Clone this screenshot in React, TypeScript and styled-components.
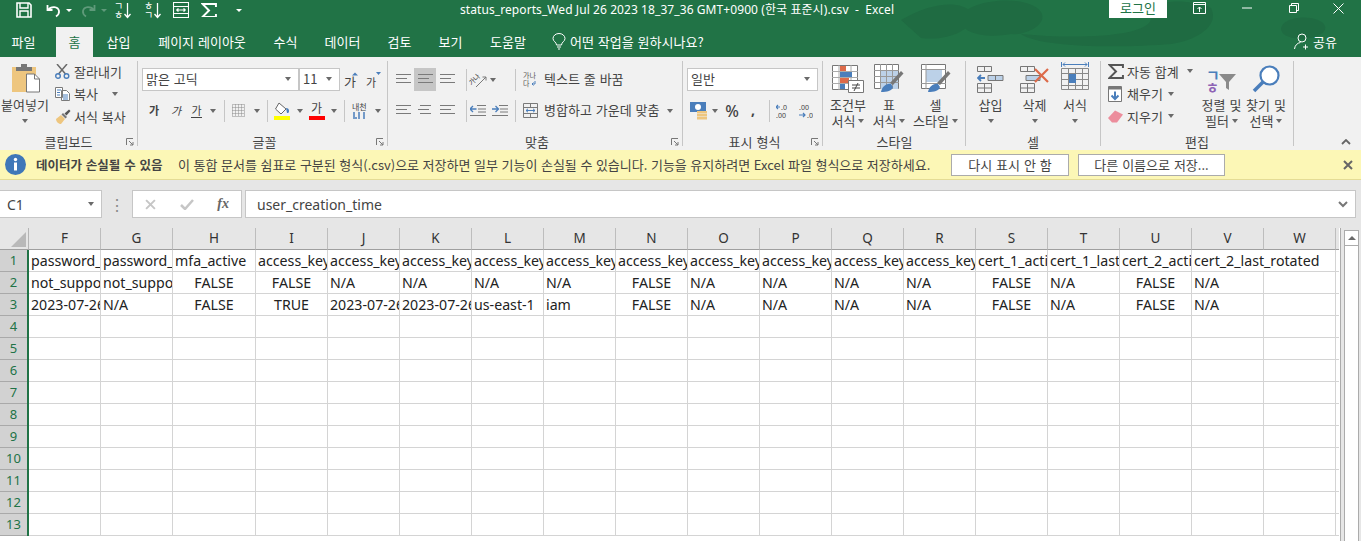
import React from "react";
import styled, { createGlobalStyle } from "styled-components";

const KR = `"Noto Sans CJK KR", "Noto Sans", sans-serif`;
const LATIN = `"Noto Sans", "Noto Sans CJK KR", sans-serif`;

const GlobalStyle = createGlobalStyle`
  html, body { margin: 0; padding: 0; height: 541px; overflow: hidden; background: #e6e6e6; }
  * { box-sizing: border-box; }
  svg { display: block; }
`;

const Page = styled.div`
  width: 1361px;
  height: 541px;
  overflow: hidden;
  display: flex;
  flex-direction: column;
  font-family: ${KR};
  color: #444;
`;

/* ---------- title bar ---------- */
const Header = styled.div`
  position: relative;
  height: 57px;
  background: #217346;
  color: #fff;
`;
const HeaderArt = styled.svg`
  position: absolute;
  right: 0;
  top: 0;
`;
const TitleRow = styled.div`
  position: relative;
  height: 20px;
  margin-bottom: 7px;
  display: flex;
  align-items: center;
`;
const Qat = styled.div`
  width: 460px;
  flex: none;
  display: flex;
  align-items: center;
  padding-left: 16px;
`;
const QatSlot = styled.div<{ $w: number }>`
  width: ${(p) => p.$w}px;
  flex: none;
  display: flex;
  align-items: center;
`;
const QatCaret = styled.span<{ $dim?: boolean }>`
  display: block;
  width: 0;
  height: 0;
  border-left: 3px solid transparent;
  border-right: 3px solid transparent;
  border-top: 3px solid ${(p) => (p.$dim ? "#5f9a7a" : "#fff")};
`;
const Title = styled.div`
  width: 649px;
  flex: none;
  font-size: 12px;
  letter-spacing: 0.08px;
  white-space: pre;
  font-family: ${LATIN};
  margin-top: -2px;
`;
const SignIn = styled.button`
  width: 58px;
  height: 18px;
  flex: none;
  align-self: flex-start;
  border: 0;
  background: #fff;
  color: #217346;
  font-family: ${KR};
  font-size: 13px;
  line-height: 16px;
  padding: 0 0 2px;
`;
const WinControls = styled.div`
  display: flex;
  align-items: center;
  margin: -4px 0 0 9px;
`;
const WinBtn = styled.div<{ $w: number }>`
  width: ${(p) => p.$w}px;
  flex: none;
  display: flex;
  justify-content: center;
`;
const TabRow = styled.div`
  position: relative;
  height: 30px;
  display: flex;
  align-items: stretch;
  font-size: 13px;
  word-spacing: 1px;
`;
const Tab = styled.div<{ $active?: boolean; $w: number }>`
  width: ${(p) => p.$w}px;
  flex: none;
  display: flex;
  align-items: center;
  justify-content: center;
  padding-bottom: 2px;
  white-space: nowrap;
  background: ${(p) => (p.$active ? "#f1f1f1" : "transparent")};
  color: ${(p) => (p.$active ? "#217346" : "#fff")};
`;
const TellMe = styled.div`
  display: flex;
  align-items: center;
  gap: 4px;
  margin-left: 12px;
  padding-bottom: 2px;
  width: 742px;
  flex: none;
  white-space: nowrap;
`;
const Share = styled.div`
  display: flex;
  align-items: center;
  gap: 2px;
  padding-bottom: 2px;
`;

/* ---------- ribbon ---------- */
const Ribbon = styled.div`
  position: relative;
  height: 93px;
  padding-top: 4px;
  display: flex;
  background: #f1f1f1;
  font-size: 13px;
  word-spacing: 1px;
`;
const Group = styled.div<{ $w: number; $pl?: number }>`
  width: ${(p) => p.$w}px;
  height: 85px;
  flex: none;
  border-right: 1px solid #c6c6c6;
  padding-left: ${(p) => p.$pl ?? 0}px;
  display: flex;
  flex-direction: column;
`;
const GroupBody = styled.div`
  height: 73px;
  flex: none;
  display: flex;
`;
const StackBody = styled.div`
  height: 73px;
  flex: none;
  padding-top: 7px;
  display: flex;
  flex-direction: column;
  gap: 8px;
`;
const GroupLabel = styled.div`
  position: relative;
  height: 16px;
  line-height: 16px;
  text-align: center;
  white-space: nowrap;
`;
const Launcher = styled.svg`
  position: absolute;
  right: 3px;
  top: 4px;
`;
const Collapse = styled.svg`
  position: absolute;
  right: 10px;
  top: 82px;
`;
const ToolRow = styled.div`
  height: 23px;
  display: flex;
  align-items: center;
`;
const Cell = styled.div<{ $w: number; $active?: boolean }>`
  width: ${(p) => p.$w}px;
  height: 23px;
  flex: none;
  display: flex;
  align-items: center;
  justify-content: center;
  background: ${(p) => (p.$active ? "#c6c6c6" : "transparent")};
`;
const Caret = styled.span<{ $ml?: number }>`
  display: inline-block;
  flex: none;
  width: 0;
  height: 0;
  margin-left: ${(p) => p.$ml ?? 0}px;
  border-left: 3.5px solid transparent;
  border-right: 3.5px solid transparent;
  border-top: 4px solid #6a6a6a;
  vertical-align: middle;
`;
const VSep = styled.span<{ $ml: number }>`
  flex: none;
  width: 1px;
  height: 22px;
  margin-left: ${(p) => p.$ml}px;
  background: #c6c6c6;
`;
const Combo = styled.div<{ $w: number }>`
  width: ${(p) => p.$w}px;
  height: 23px;
  flex: none;
  display: flex;
  align-items: center;
  justify-content: space-between;
  padding: 0 7px 2px 3px;
  background: #fff;
  border: 1px solid #c6c6c6;
  white-space: nowrap;
`;
const Glyph = styled.span<{ $b?: boolean; $i?: boolean; $u?: boolean }>`
  font-size: 11px;
  line-height: 13px;
  font-weight: ${(p) => (p.$b ? 700 : 400)};
  font-style: ${(p) => (p.$i ? "italic" : "normal")};
  border-bottom: ${(p) => (p.$u ? "1px solid #444" : "0")};
`;
const BigColumn = styled.div<{ $w: number }>`
  width: ${(p) => p.$w}px;
  flex: none;
  display: flex;
  flex-direction: column;
  align-items: center;
`;
const BigIcon = styled.div`
  height: 36px;
  display: flex;
  align-items: flex-end;
  padding-bottom: 4px;
`;
const BigLine = styled.div`
  height: 16px;
  line-height: 16px;
  white-space: nowrap;
  display: flex;
  align-items: center;
  gap: 3px;
`;
const SmallStack = styled.div<{ $w: number; $pl: number }>`
  width: ${(p) => p.$w}px;
  padding-left: ${(p) => p.$pl}px;
  margin-top: -1px;
  flex: none;
  display: flex;
  flex-direction: column;
`;
const SmallRow = styled.div`
  height: 22.5px;
  display: flex;
  align-items: center;
  white-space: nowrap;
`;
const SmallIcon = styled.span`
  width: 19px;
  flex: none;
`;
const WrapLabel = styled.span`
  white-space: nowrap;
  margin-top: -2px;
`;

/* ---------- message bar ---------- */
const MessageBar = styled.div`
  height: 30px;
  flex: none;
  display: flex;
  align-items: center;
  padding-left: 5px;
  background: #fcf7b6;
  border-bottom: 1px solid #e4dc95;
  font-size: 13px;
  white-space: nowrap;
`;
const MessageTitle = styled.b`
  font-weight: 700;
  font-size: 12.5px;
  word-spacing: 1px;
  margin-left: 10px;
  width: 142px;
  flex: none;
`;
const MessageText = styled.span`
  width: 773px;
  flex: none;
  word-spacing: 0.65px;
`;
const BarButton = styled.button<{ $w: number; $ml: number }>`
  width: ${(p) => p.$w}px;
  height: 22px;
  flex: none;
  margin-left: ${(p) => p.$ml}px;
  background: #fff;
  border: 1px solid #ababab;
  color: #444;
  font-family: ${KR};
  font-size: 13px;
  word-spacing: 1px;
  padding: 0;
`;
const BarClose = styled.svg`
  margin-left: 118px;
`;

/* ---------- formula bar ---------- */
const FormulaRow = styled.div`
  height: 48px;
  flex: none;
  padding-top: 10px;
  display: flex;
  align-items: flex-start;
  background: #e6e6e6;
`;
const NameBox = styled.div`
  width: 102px;
  height: 28px;
  display: flex;
  align-items: center;
  justify-content: space-between;
  padding: 0 7px;
  background: #fff;
  border: 1px solid #c6c6c6;
  border-left: 0;
  font-family: ${LATIN};
  font-size: 14px;
`;
const Grip = styled.div`
  width: 30px;
  height: 28px;
  display: flex;
  align-items: center;
  justify-content: center;
  color: #8a8a8a;
`;
const FxBox = styled.div`
  width: 110px;
  height: 28px;
  display: flex;
  align-items: center;
  justify-content: space-between;
  padding: 0 12px;
  background: #fff;
  border: 1px solid #c6c6c6;
`;
const FormulaInput = styled.div`
  width: 1111px;
  height: 28px;
  margin-left: 3px;
  display: flex;
  align-items: center;
  justify-content: space-between;
  padding: 0 7px 0 11px;
  background: #fff;
  border: 1px solid #c6c6c6;
  font-family: ${LATIN};
  font-size: 14px;
  color: #444;
`;

/* ---------- sheet ---------- */
const SheetArea = styled.div`
  flex: 1;
  min-height: 0;
  display: flex;
  background: #e6e6e6;
  font-family: ${LATIN};
`;
const Sheet = styled.div`
  width: 1340px;
  flex: none;
  height: 313px;
  display: grid;
  grid-template-columns: 27px 2px 72px 72px 83px repeat(15, 72px) 3px;
  grid-auto-rows: 22px;
  grid-template-rows: 22px;
  align-content: start;
  background: #fff;
  overflow: hidden;
`;
const Corner = styled.div`
  grid-column: 1 / span 2;
  background: #e6e6e6;
  border-bottom: 1px solid #9f9f9f;
  border-right: 1px solid #b5b5b5;
  padding: 4px 3px 0 11px;
`;
const ColHead = styled.div<{ $stub?: boolean }>`
  background: #e6e6e6;
  border-bottom: 1px solid #9f9f9f;
  border-right: ${(p) => (p.$stub ? "0" : "1px solid #bdbdbd")};
  font-size: 13.5px;
  line-height: 21px;
  text-align: center;
  color: #333;
`;
const RowHead = styled.div`
  background: #d2d2d2;
  border-bottom: 1px solid #a9a9a9;
  font-size: 13px;
  line-height: 21px;
  text-align: center;
  color: #217346;
`;
const Edge = styled.div`
  background: #217346;
`;
const DataCell = styled.div<{ $center?: boolean; $span?: number; $stub?: boolean }>`
  grid-column: span ${(p) => p.$span ?? 1};
  min-width: 0;
  overflow: hidden;
  white-space: nowrap;
  border-bottom: 1px solid #d4d4d4;
  border-right: ${(p) => (p.$stub ? "0" : "1px solid #d4d4d4")};
  padding-left: ${(p) => (p.$center ? 0 : 2)}px;
  text-align: ${(p) => (p.$center ? "center" : "left")};
  font-size: 14.2px;
  line-height: 21px;
  color: #222;
`;
const ScrollGutter = styled.div`
  flex: 1;
  border-left: 1px solid #ababab;
  padding: 2px 3px 0 3px;
`;
const ScrollTrack = styled.div`
  height: 313px;
  width: 15px;
  background: #fff;
  border: 1px solid #ababab;
`;
const ScrollUp = styled.div`
  height: 15px;
  display: flex;
  align-items: center;
  justify-content: center;
  border-bottom: 1px solid #ababab;
`;
const ScrollTriangle = styled.span`
  width: 0;
  height: 0;
  border-left: 4px solid transparent;
  border-right: 4px solid transparent;
  border-bottom: 4px solid #6a6a6a;
`;

/* ---------- icons ---------- */
const W = "#fff";
const BLUE = "#4a7ebb";
const GR = "#6a6a6a";
const LINE = "#7a7a7a";

const SaveIcon = () => (
  <svg width="16" height="16" viewBox="0 0 16 16" fill="none">
    <path d="M1 1h12l2 2v12H1z" stroke={W} strokeWidth="1.6" />
    <path d="M4 1v5h8V1M4 15v-6h8v6" stroke={W} strokeWidth="1.4" />
  </svg>
);
const UndoIcon = ({ color }: { color: string }) => (
  <svg width="15" height="15" viewBox="0 0 15 15" fill="none">
    <path d="M1.5 2v5h5" stroke={color} strokeWidth="1.8" />
    <path d="M2 7c3-4 10-4 11 1 .4 2.5-1.5 4.5-3 5.5" stroke={color} strokeWidth="1.8" />
  </svg>
);
const RedoIcon = ({ color }: { color: string }) => (
  <svg width="15" height="15" viewBox="0 0 15 15" fill="none">
    <path d="M13.5 2v5h-5" stroke={color} strokeWidth="1.8" />
    <path d="M13 7c-3-4-10-4-11 1-.4 2.5 1.5 4.5 3 5.5" stroke={color} strokeWidth="1.8" />
  </svg>
);
const QatSort = ({ top, bottom }: { top: string; bottom: string }) => (
  <svg width="16" height="17" viewBox="0 0 16 17" fill="none">
    <text x="-1" y="8" fontSize="10" fill={W} fontFamily="Noto Sans CJK KR">{top}</text>
    <text x="-1" y="17" fontSize="10" fill={W} fontFamily="Noto Sans CJK KR">{bottom}</text>
    <path d="M12.5 1v14M9.5 12l3 3.5 3-3.5" stroke={W} strokeWidth="1.3" />
  </svg>
);
const QatForm = () => (
  <svg width="16" height="16" viewBox="0 0 16 16" fill="none" stroke={W} strokeWidth="1.1">
    <path d="M.5.5h15v15H.5zM.5 4.500h15M.5 11.500h15M3.500 8h9M3.500 8l2-1.500M3.500 8l2 1.500M12.500 8l-2-1.500M12.500 8l-2 1.500" />
  </svg>
);
const Sigma = ({ color, size }: { color: string; size: number }) => (
  <svg width={size} height={size * 0.93} viewBox="0 0 16 15" fill="none">
    <path d="M15 4V1H1.5L8 7.5 1.5 14H15v-3" stroke={color} strokeWidth="2" />
  </svg>
);
const RestoreRibbon = () => (
  <svg width="13" height="12" viewBox="0 0 13 12" fill="none" stroke={W}>
    <path d="M.5.5h12v11H.5zM.5 2.500h12M6.500 10V5M4.500 7l2-2 2 2" />
  </svg>
);
const MinIcon = () => (
  <svg width="10" height="2" viewBox="0 0 10 2"><path d="M0 1h10" stroke={W} /></svg>
);
const MaxIcon = () => (
  <svg width="10" height="10" viewBox="0 0 10 10" fill="none" stroke={W}>
    <path d="M.5 2.500h7v7h-7zM2.500 2.500v-2h7v7h-2" />
  </svg>
);
const CloseIcon = () => (
  <svg width="11" height="11" viewBox="0 0 11 11" fill="none" stroke={W}>
    <path d="M.5.5l10 10M10.500.5l-10 10" />
  </svg>
);
const Bulb = () => (
  <svg width="14" height="17" viewBox="0 0 14 17" fill="none" stroke={W}>
    <path d="M4.500 12c0-3-3.500-3.500-3.500-6.500a6 5 0 0 1 12 0c0 3-3.500 3.500-3.500 6.500zM5 14h4M6 16h2" />
  </svg>
);
const Person = () => (
  <svg width="17" height="17" viewBox="0 0 17 17" fill="none" stroke={W}>
    <circle cx="8" cy="5" r="4" />
    <path d="M.5 16c.5-4 3-6 6-6.500M11.500 11.500v5M9 14h5" />
  </svg>
);

const PasteIcon = () => (
  <svg width="29" height="30" viewBox="0 0 29 30">
    <path d="M1 4h24v25H1z" fill="#eec67f" />
    <path d="M5 4h16v4H5zM10 1h6v4h-6z" fill="#777" />
    <path d="M15.500 11h8l5 5v13h-13z" fill="#fff" stroke="#777" />
    <path d="M23.500 11v5h5" fill="none" stroke="#777" />
  </svg>
);
const ScissorsIcon = () => (
  <svg width="15" height="15" viewBox="0 0 15 15" fill="none">
    <path d="M2 0l8.500 10M12 0L3.500 10" stroke={GR} strokeWidth="1.5" />
    <circle cx="3" cy="12" r="2.3" stroke={BLUE} strokeWidth="1.4" />
    <circle cx="11.5" cy="12" r="2.3" stroke={BLUE} strokeWidth="1.4" />
  </svg>
);
const CopyIcon = () => (
  <svg width="15" height="15" viewBox="0 0 15 15" fill="#fff" stroke={LINE}>
    <path d="M.5 1.500h7v10h-7zM6.500 4.500h5l3 3v7h-8z" />
    <path d="M2 4h4M2 6.500h3M2 9h3M8 9h5M8 11h5M8 13h5" stroke={BLUE} />
  </svg>
);
const BrushIcon = () => (
  <svg width="16" height="15" viewBox="0 0 16 15">
    <path d="M1 10l5-4 4 4-4 5c-2 0-5-2-5-5z" fill="#eec67f" />
    <path d="M6.500 5.500l4 4 1.500-1.500-4-4z" fill="#777" />
    <path d="M9.500 4.500L14 .5l1.500 1.500-4 4.500z" fill="#555" />
  </svg>
);
const GrowFont = ({ up }: { up: boolean }) => (
  <svg width="15" height="16" viewBox="0 0 15 16">
    <text x="0" y="15" fontSize={up ? 13 : 11} fill="#444" fontFamily="Noto Sans CJK KR">가</text>
    <path d={up ? "M8 3.500l3-3 3 3z" : "M10 0h5l-2.500 3z"} fill={BLUE} />
  </svg>
);
const BordersIcon = () => (
  <svg width="13" height="13" viewBox="0 0 13 13" fill="none" stroke="#8a8a8a" strokeDasharray="1 1">
    <path d="M.5.5h12v12H.5zM.5 6.500h12M6.500.5v12M.5 3.500h12M.5 9.500h12M3.500.5v12M9.500.5v12" />
  </svg>
);
const FillIcon = () => (
  <svg width="16" height="18" viewBox="0 0 16 18">
    <path d="M5 1l7 6-5 5-5.500-5z" fill="#fff" stroke="#666" />
    <path d="M12 6c2 0 3 1 3 3s-1 2-2 2z" fill={BLUE} />
    <path d="M0 14h16v4H0z" fill="#ff0" />
  </svg>
);
const FontColor = () => (
  <svg width="16" height="18" viewBox="0 0 16 18">
    <text x="2" y="11" fontSize="12" fill="#444" fontFamily="Noto Sans CJK KR">가</text>
    <path d="M0 14h16v4H0z" fill="#f00" />
  </svg>
);
const PhoneticIcon = () => (
  <svg width="16" height="18" viewBox="0 0 16 18">
    <text x="0" y="8" fontSize="8" fill="#444" fontFamily="Noto Sans CJK KR">내천</text>
    <path d="M2 10v7M7 10v7M12 10v7M4 15v2" stroke={BLUE} strokeWidth="1.5" />
  </svg>
);
const AlignIcon = ({ widths, top = 0 }: { widths: [number, number, number]; top?: number }) => (
  <svg width="15" height="11" viewBox="0 0 15 11" stroke={LINE}>
    {widths.map((x, i) => (
      <path key={i} d={`M${x} ${top + i * 4 + 0.5}H${15 - (x === 0 && i === 1 ? 4 : x)}`} />
    ))}
  </svg>
);
const OrientIcon = () => (
  <svg width="18" height="18" viewBox="0 0 18 18" fill="none">
    <text x="0" y="11" fontSize="7" fill="#444" fontFamily="Noto Sans CJK KR" transform="rotate(-45 6 10)">가나</text>
    <path d="M7 16L17 6M13.500 6H17v3.500" stroke={LINE} />
  </svg>
);
const WrapIcon = () => (
  <svg width="14" height="17" viewBox="0 0 14 17" fill="none">
    <text x="0" y="7" fontSize="7" fill="#555" fontFamily="Noto Sans CJK KR">가나</text>
    <text x="0" y="15" fontSize="7" fill="#555" fontFamily="Noto Sans CJK KR">다</text>
    <path d="M12 10v3H9M10.500 11.500L9 13l1.500 1.500" stroke={BLUE} />
  </svg>
);
const IndentIcon = ({ out }: { out: boolean }) => (
  <svg width="16" height="11" viewBox="0 0 16 11" fill="none">
    <path d="M7 .5h9M8 4h8M8 7h8M0 10.500h16" stroke={LINE} />
    <path d={out ? "M0 4h6.500M3 1L0 4l3 3" : "M0 4h6M3.500 1l3 3-3 3"} stroke={BLUE} strokeWidth="1.3" />
  </svg>
);
const MergeIcon = () => (
  <svg width="15" height="15" viewBox="0 0 15 15" fill="none">
    <path d="M.5.5h14v14H.5zM.5 4.500h14M.5 10.500h14M7.500.5v4M7.500 10.500v4" stroke={LINE} />
    <path d="M3 7.500h9M5 5.800L3 7.500l2 1.700M10 5.800l2 1.700-2 1.700" stroke={BLUE} />
  </svg>
);
const CurrencyIcon = () => (
  <svg width="18" height="18" viewBox="0 0 18 18">
    <path d="M0 0h16v10H0z" fill={BLUE} />
    <circle cx="8" cy="5" r="3" fill="#fff" />
    <path d="M7 9h10v2.500H7zM7 12h10v2.500H7zM7 15h10v2.500H7z" fill="#eec67f" />
  </svg>
);
const Percent = styled.span`
  font-family: ${LATIN};
  font-size: 16px;
  font-weight: 500;
`;
const CommaMark = styled.span`
  font-family: ${LATIN};
  font-size: 14px;
  font-weight: 700;
  margin-top: -3px;
`;
const DecimalIcon = ({ more }: { more: boolean }) => (
  <svg width="14" height="14" viewBox="0 0 14 14">
    <text x={more ? 5 : 0} y="6" fontSize="7" fill="#444" fontFamily="Noto Sans">{more ? ".0" : ".00"}</text>
    <text x={more ? 0 : 8} y="14" fontSize="7" fill="#444" fontFamily="Noto Sans">{more ? ".00" : ".0"}</text>
    <path d={more ? "M0 3h4M2 1L0 3l2 2" : "M0 11h6M4 9l2 2-2 2"} stroke={BLUE} fill="none" strokeWidth="1.2" />
  </svg>
);
const CondIcon = () => (
  <svg width="32" height="28" viewBox="0 0 32 28">
    <path d="M.5.5h25v24H.5z" fill="#fff" stroke="#777" />
    <path d="M0 6.500h26M0 12.500h26M0 18.500h26M7 0v25M19 0v25" stroke="#aaa" />
    <path d="M8 1h6v5H8z" fill="#dd6b4a" />
    <path d="M8 7h12v5H8z" fill={BLUE} />
    <path d="M8 13h9v5H8z" fill="#dd6b4a" />
    <path d="M8 19h5v5H8z" fill={BLUE} />
    <path d="M16.500 15.500h15v12h-15z" fill="#fff" stroke="#777" />
    <path d="M20 20h8M20 23h8M26 18l-4 8" stroke="#444" />
  </svg>
);
const StyleIcon = ({ header }: { header: boolean }) => (
  <svg width="30" height="29" viewBox="0 0 30 29">
    <path d="M.5.5h24v24H.5z" fill="#fff" stroke="#777" />
    <path d={header ? "M5 6h16v12H5z" : "M6 7h18v18H6z"} fill="#bcd1e8" />
    <path d={header ? "M0 5.500h25M0 19.500h25M5 0v25" : "M0 6.500h25M0 12.500h25M0 18.500h25M6.500 0v25M12.500 0v25M18.500 0v25"} stroke="#999" />
    <path d="M16 19L27 7l2.500 2.500L19 21z" fill="#777" />
    <path d="M7 28c1-5 5-9 10-8l2 3c-1 4-6 5-12 5z" fill={BLUE} />
  </svg>
);
const InsertIcon = () => (
  <svg width="27" height="27" viewBox="0 0 27 27" fill="none">
    <path d="M.5.5h14v5H.5zM7.500.5v5M.5 17.500h14v9H.5zM.5 22h14M7.500 17.500v9" stroke="#777" />
    <path d="M11 9.500h15v5H11zM18.500 9.500v5" fill="#bcd1e8" stroke="#777" />
    <path d="M1 12h7M4 9l-3 3 3 3" stroke={BLUE} strokeWidth="1.8" />
  </svg>
);
const DeleteIcon = () => (
  <svg width="30" height="27" viewBox="0 0 30 27" fill="none">
    <path d="M.5.5h14v5H.5zM7.500.5v5M.5 17.500h14v9H.5zM.5 22h14M7.500 17.500v9" stroke="#777" />
    <path d="M6 9.500h14v5H6z" fill="#bcd1e8" stroke="#777" />
    <path d="M15 3l13 13M28 3L15 16" stroke="#dd6b4a" strokeWidth="2.2" />
  </svg>
);
const FormatIcon = () => (
  <svg width="28" height="31" viewBox="0 0 28 31" fill="none">
    <path d="M.5 0v5M27.500 0v5M2 2.500h24M2 2.500l2-2M2 2.500l2 2M26 2.500l-2-2M26 2.500l-2 2" stroke={BLUE} />
    <path d="M.5 6.500h27v21H.5zM.5 11.500h27M.5 17.500h27M.5 23.500h27M7.500 6.500v21M14.500 6.500v21M21.500 6.500v21" stroke="#888" />
    <path d="M8 12h7v9H8z" fill={BLUE} />
  </svg>
);
const FillDown = () => (
  <svg width="14" height="16" viewBox="0 0 14 16" fill="none">
    <path d="M.5.5h13v15H.5z" stroke="#777" fill="#fff" />
    <path d="M1 1h12v2.500H1z" fill="#777" />
    <path d="M7 5.500V13M3.500 9.500L7 13l3.500-3.500" stroke={BLUE} strokeWidth="2" />
  </svg>
);
const Eraser = () => (
  <svg width="15" height="13" viewBox="0 0 15 13">
    <path d="M0 8l7-7.500 8 4-6 8H4z" fill="#ec8d9c" />
  </svg>
);
const SortFilter = () => (
  <svg width="30" height="23" viewBox="0 0 30 23" fill="none">
    <text x="-1" y="11" fontSize="15" fontWeight="700" fill={BLUE} fontFamily="Noto Sans CJK KR">ㄱ</text>
    <text x="-1" y="23" fontSize="14" fontWeight="700" fill="#8e63b5" fontFamily="Noto Sans CJK KR">ㅎ</text>
    <path d="M12 4h17l-7 8v8l-3-2v-6z" fill="#8a8a8a" />
  </svg>
);
const FindIcon = () => (
  <svg width="28" height="28" viewBox="0 0 28 28" fill="none">
    <circle cx="17.5" cy="10.5" r="9" stroke={BLUE} strokeWidth="2.2" fill="#fff" />
    <path d="M11 17L2 26" stroke={BLUE} strokeWidth="3.5" />
  </svg>
);
const LauncherMark = () => (
  <Launcher width="8" height="8" viewBox="0 0 8 8" fill="none" stroke="#777">
    <path d="M.5 7V.5H7M3 3l4 4M4 7h3V4" />
  </Launcher>
);
const Check = () => (
  <svg width="14" height="11" viewBox="0 0 14 11" fill="none">
    <path d="M1 6l4 4 8-9" stroke="#c6c6c6" strokeWidth="2.5" />
  </svg>
);
const Cross = ({ color, size }: { color: string; size: number }) => (
  <svg width={size} height={size} viewBox="0 0 10 10" fill="none">
    <path d="M1 1l8 8M9 1L1 9" stroke={color} strokeWidth="1.8" />
  </svg>
);
const Chevron = () => (
  <svg width="10" height="7" viewBox="0 0 10 7" fill="none">
    <path d="M1 1l4 4 4-4" stroke="#777" strokeWidth="2" />
  </svg>
);
const FxMark = styled.i`
  font-family: "Liberation Serif", serif;
  font-size: 14px;
  font-weight: 700;
  color: #666;
`;

/* ---------- data ---------- */
const COLS = "FGHIJKLMNOPQRSTUVW".split("");
type Row = (string | { t: string; c: true })[];
const f = { t: "FALSE", c: true as const };
const key = "access_key";
const ROWS: Row[] = [
  ["password_", "password_", "mfa_active", key, key, key, key, key, key, key, key, key, key, "cert_1_acti", "cert_1_last", "cert_2_acti"],
  ["not_supported", "not_supported", f, f, "N/A", "N/A", "N/A", "N/A", f, "N/A", "N/A", "N/A", "N/A", f, "N/A", f, "N/A"],
  ["2023-07-26", "N/A", f, { t: "TRUE", c: true }, "2023-07-26", "2023-07-26", "us-east-1", "iam", f, "N/A", "N/A", "N/A", "N/A", f, "N/A", f, "N/A"],
];

function renderRow(row: Row, index: number) {
  const cells = [];
  for (let i = 0; i < COLS.length; i++) {
    const v = row[i];
    if (index === 0 && i === 16) {
      // last header spills over the empty W cell
      cells.push(<DataCell key={i} $span={2}>cert_2_last_rotated</DataCell>);
      break;
    }
    if (v === undefined) cells.push(<DataCell key={i} />);
    else if (typeof v === "string") cells.push(<DataCell key={i}>{v}</DataCell>);
    else cells.push(<DataCell key={i} $center>{v.t}</DataCell>);
  }
  return cells;
}

export default function App() {
  return (
    <Page>
      <GlobalStyle />
      <Header>
        <HeaderArt width="460" height="57" viewBox="0 0 460 57" fill="#1f6b42">
          <path d="M0 20c30-18 60-20 70-8 8 14-20 30-50 26zM58 18c10-20 70-24 82-6 8 14-20 24-30 22-20 4-50 2-52-16zM120 34c60 6 130 2 130-16-10-20 40-20 60-10 10 20-20 34-40 36-50 4-130 4-150-10zM380 30c0-16 40-16 44-4 4 14-40 18-44 4z" />
        </HeaderArt>
        <TitleRow>
          <Qat>
            <QatSlot $w={30}><SaveIcon /></QatSlot>
            <QatSlot $w={20}><UndoIcon color={W} /></QatSlot>
            <QatSlot $w={15}><QatCaret /></QatSlot>
            <QatSlot $w={20}><RedoIcon color="#5f9a7a" /></QatSlot>
            <QatSlot $w={14}><QatCaret $dim /></QatSlot>
            <QatSlot $w={30}><QatSort top="ㄱ" bottom="ㅎ" /></QatSlot>
            <QatSlot $w={28}><QatSort top="ㅎ" bottom="ㄱ" /></QatSlot>
            <QatSlot $w={28}><QatForm /></QatSlot>
            <QatSlot $w={35}><Sigma color={W} size={16} /></QatSlot>
            <QatSlot $w={6}><QatCaret /></QatSlot>
          </Qat>
          <Title>status_reports_Wed Jul 26 2023 18_37_36 GMT+0900 (한국 표준시).csv  -  Excel</Title>
          <SignIn>로그인</SignIn>
          <WinControls>
            <WinBtn $w={47}><RestoreRibbon /></WinBtn>
            <WinBtn $w={47}><MinIcon /></WinBtn>
            <WinBtn $w={47}><MaxIcon /></WinBtn>
            <WinBtn $w={43}><CloseIcon /></WinBtn>
          </WinControls>
        </TitleRow>
        <TabRow>
          <Tab $w={47}>파일</Tab>
          <Tab $w={9} />
          <Tab $w={37} $active>홈</Tab>
          <Tab $w={51}>삽입</Tab>
          <Tab $w={116}>페이지 레이아웃</Tab>
          <Tab $w={51}>수식</Tab>
          <Tab $w={63}>데이터</Tab>
          <Tab $w={51}>검토</Tab>
          <Tab $w={51}>보기</Tab>
          <Tab $w={64}>도움말</Tab>
          <TellMe><Bulb />어떤 작업을 원하시나요?</TellMe>
          <Share><Person />공유</Share>
        </TabRow>
      </Header>

      <Ribbon>
        <Group $w={138}>
          <GroupBody>
            <BigColumn $w={50}>
              <BigIcon><PasteIcon /></BigIcon>
              <BigLine>붙여넣기</BigLine>
              <BigLine><Caret /></BigLine>
            </BigColumn>
            <SmallStack $w={87} $pl={5}>
              <SmallRow><SmallIcon><ScissorsIcon /></SmallIcon>잘라내기</SmallRow>
              <SmallRow><SmallIcon><CopyIcon /></SmallIcon>복사<Caret $ml={14} /></SmallRow>
              <SmallRow><SmallIcon><BrushIcon /></SmallIcon>서식 복사</SmallRow>
            </SmallStack>
          </GroupBody>
          <GroupLabel>클립보드<LauncherMark /></GroupLabel>
        </Group>

        <Group $w={250} $pl={4}>
          <StackBody>
            <ToolRow>
              <Combo $w={157}>맑은 고딕<Caret /></Combo>
              <Combo $w={41}>11<Caret /></Combo>
              <Cell $w={22}><GrowFont up /></Cell>
              <Cell $w={23}><GrowFont up={false} /></Cell>
            </ToolRow>
            <ToolRow>
              <Cell $w={24}><Glyph $b>가</Glyph></Cell>
              <Cell $w={20}><Glyph $i>가</Glyph></Cell>
              <Cell $w={21}><Glyph $u>가</Glyph></Cell>
              <Cell $w={12}><Caret /></Cell>
              <VSep $ml={5} />
              <Cell $w={27}><BordersIcon /></Cell>
              <Cell $w={9}><Caret /></Cell>
              <VSep $ml={6} />
              <Cell $w={28}><FillIcon /></Cell>
              <Cell $w={8}><Caret /></Cell>
              <Cell $w={26}><FontColor /></Cell>
              <Cell $w={8}><Caret /></Cell>
              <VSep $ml={6} />
              <Cell $w={30}><PhoneticIcon /></Cell>
              <Cell $w={6}><Caret /></Cell>
            </ToolRow>
          </StackBody>
          <GroupLabel>글꼴<LauncherMark /></GroupLabel>
        </Group>

        <Group $w={295} $pl={4}>
          <StackBody>
            <ToolRow>
              <Cell $w={22}><AlignIcon widths={[0, 0, 0]} /></Cell>
              <Cell $w={22} $active><AlignIcon widths={[0, 0, 0]} /></Cell>
              <Cell $w={22}><AlignIcon widths={[0, 0, 0]} /></Cell>
              <VSep $ml={8} />
              <Cell $w={22}><OrientIcon /></Cell>
              <Cell $w={8}><Caret /></Cell>
              <VSep $ml={18} />
              <Cell $w={28}><WrapIcon /></Cell>
              <WrapLabel>텍스트 줄 바꿈</WrapLabel>
            </ToolRow>
            <ToolRow>
              <Cell $w={22}><AlignIcon widths={[0, 0, 0]} /></Cell>
              <Cell $w={22}><AlignIcon widths={[2, 0, 2]} /></Cell>
              <Cell $w={22}><AlignIcon widths={[0, 0, 0]} /></Cell>
              <VSep $ml={8} />
              <Cell $w={22}><IndentIcon out /></Cell>
              <Cell $w={22}><IndentIcon out={false} /></Cell>
              <VSep $ml={4} />
              <Cell $w={28}><MergeIcon /></Cell>
              <WrapLabel>병합하고 가운데 맞춤</WrapLabel>
              <Caret $ml={8} />
            </ToolRow>
          </StackBody>
          <GroupLabel>맞춤<LauncherMark /></GroupLabel>
        </Group>

        <Group $w={140} $pl={4}>
          <StackBody>
            <ToolRow><Combo $w={131}>일반<Caret /></Combo></ToolRow>
            <ToolRow>
              <Cell $w={24}><CurrencyIcon /></Cell>
              <Cell $w={8}><Caret /></Cell>
              <Cell $w={26}><Percent>%</Percent></Cell>
              <Cell $w={16}><CommaMark>,</CommaMark></Cell>
              <VSep $ml={8} />
              <Cell $w={26}><DecimalIcon more /></Cell>
              <Cell $w={20}><DecimalIcon more={false} /></Cell>
            </ToolRow>
          </StackBody>
          <GroupLabel>표시 형식<LauncherMark /></GroupLabel>
        </Group>

        <Group $w={143} $pl={1}>
          <GroupBody>
            <BigColumn $w={48}>
              <BigIcon><CondIcon /></BigIcon>
              <BigLine>조건부</BigLine>
              <BigLine>서식<Caret /></BigLine>
            </BigColumn>
            <BigColumn $w={34}>
              <BigIcon><StyleIcon header={false} /></BigIcon>
              <BigLine>표</BigLine>
              <BigLine>서식<Caret /></BigLine>
            </BigColumn>
            <BigColumn $w={59}>
              <BigIcon><StyleIcon header /></BigIcon>
              <BigLine>셀</BigLine>
              <BigLine>스타일<Caret /></BigLine>
            </BigColumn>
          </GroupBody>
          <GroupLabel>스타일</GroupLabel>
        </Group>

        <Group $w={135}>
          <GroupBody>
            <BigColumn $w={49}>
              <BigIcon><InsertIcon /></BigIcon>
              <BigLine>삽입</BigLine>
              <BigLine><Caret /></BigLine>
            </BigColumn>
            <BigColumn $w={39}>
              <BigIcon><DeleteIcon /></BigIcon>
              <BigLine>삭제</BigLine>
              <BigLine><Caret /></BigLine>
            </BigColumn>
            <BigColumn $w={42}>
              <BigIcon><FormatIcon /></BigIcon>
              <BigLine>서식</BigLine>
              <BigLine><Caret /></BigLine>
            </BigColumn>
          </GroupBody>
          <GroupLabel>셀</GroupLabel>
        </Group>

        <Group $w={193}>
          <GroupBody>
            <SmallStack $w={99} $pl={7}>
              <SmallRow><SmallIcon><Sigma color="#555" size={16} /></SmallIcon>자동 합계<Caret $ml={8} /></SmallRow>
              <SmallRow><SmallIcon><FillDown /></SmallIcon>채우기<Caret $ml={5} /></SmallRow>
              <SmallRow><SmallIcon><Eraser /></SmallIcon>지우기<Caret $ml={5} /></SmallRow>
            </SmallStack>
            <BigColumn $w={43}>
              <BigIcon><SortFilter /></BigIcon>
              <BigLine>정렬 및</BigLine>
              <BigLine>필터<Caret /></BigLine>
            </BigColumn>
            <BigColumn $w={46}>
              <BigIcon><FindIcon /></BigIcon>
              <BigLine>찾기 및</BigLine>
              <BigLine>선택<Caret /></BigLine>
            </BigColumn>
          </GroupBody>
          <GroupLabel>편집</GroupLabel>
        </Group>
        <Collapse width="10" height="6" viewBox="0 0 10 6" fill="none">
          <path d="M1 5l4-4 4 4" stroke="#666" strokeWidth="1.8" />
        </Collapse>
      </Ribbon>

      <MessageBar>
        <svg width="21" height="21" viewBox="0 0 21 21">
          <circle cx="10.5" cy="10.5" r="10.5" fill="#3f77b8" />
          <circle cx="10.5" cy="5.5" r="1.7" fill="#fff" />
          <path d="M9 8.500h3v8H9z" fill="#fff" />
        </svg>
        <MessageTitle>데이터가 손실될 수 있음</MessageTitle>
        <MessageText>이 통합 문서를 쉼표로 구분된 형식(.csv)으로 저장하면 일부 기능이 손실될 수 있습니다. 기능을 유지하려면 Excel 파일 형식으로 저장하세요.</MessageText>
        <BarButton $w={118} $ml={0}>다시 표시 안 함</BarButton>
        <BarButton $w={147} $ml={9}>다른 이름으로 저장...</BarButton>
        <BarClose width="10" height="10" viewBox="0 0 10 10" fill="none">
          <path d="M1 1l8 8M9 1L1 9" stroke="#666" strokeWidth="2" />
        </BarClose>
      </MessageBar>

      <FormulaRow>
        <NameBox>C1<Caret /></NameBox>
        <Grip>⋮</Grip>
        <FxBox>
          <Cross color="#c6c6c6" size={11} />
          <Check />
          <FxMark>fx</FxMark>
        </FxBox>
        <FormulaInput>user_creation_time<Chevron /></FormulaInput>
      </FormulaRow>

      <SheetArea>
        <Sheet>
          <Corner>
            <svg width="15" height="15" viewBox="0 0 15 15"><path d="M15 0v15H0z" fill="#b9b9b9" /></svg>
          </Corner>
          {COLS.map((c) => <ColHead key={c}>{c}</ColHead>)}
          <ColHead $stub />
          {Array.from({ length: 13 }, (_, i) => (
            <React.Fragment key={i}>
              <RowHead>{i + 1}</RowHead>
              <Edge />
              {ROWS[i] ? renderRow(ROWS[i], i) : COLS.map((c) => <DataCell key={c} />)}
              <DataCell $stub />
            </React.Fragment>
          ))}
        </Sheet>
        <ScrollGutter>
          <ScrollTrack>
            <ScrollUp><ScrollTriangle /></ScrollUp>
          </ScrollTrack>
        </ScrollGutter>
      </SheetArea>
    </Page>
  );
}
